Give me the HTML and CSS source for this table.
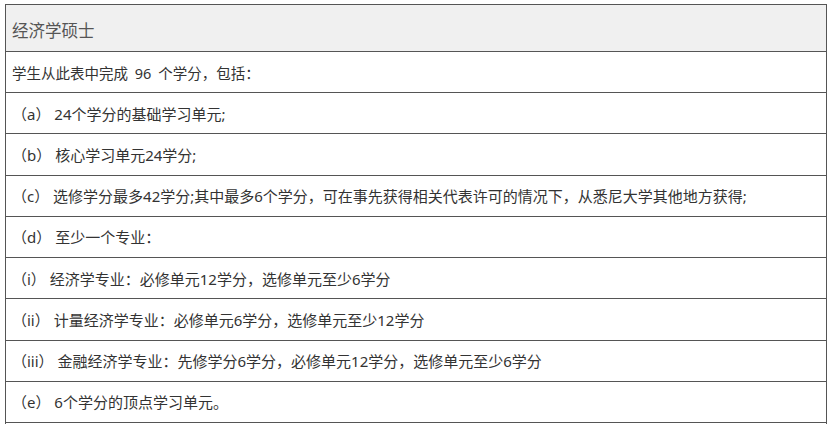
FILE: index.html
```html
<!DOCTYPE html>
<html lang="zh-CN">
<head>
<meta charset="utf-8">
<title>经济学硕士</title>
<link rel="stylesheet" href="styles.css">
</head>
<body>
<div class="table">
  <div class="row head">经济学硕士</div>
  <div class="row intro">学生从此表中完成 96 个学分，包括：</div>
  <div class="row">（a） 24个学分的基础学习单元;</div>
  <div class="row">（b） 核心学习单元24学分;</div>
  <div class="row">（c） 选修学分最多42学分;其中最多6个学分，可在事先获得相关代表许可的情况下，从悉尼大学其他地方获得;</div>
  <div class="row">（d） 至少一个专业：</div>
  <div class="row">（i） 经济学专业：必修单元12学分，选修单元至少6学分</div>
  <div class="row">（ii） 计量经济学专业：必修单元6学分，选修单元至少12学分</div>
  <div class="row">（iii） 金融经济学专业：先修学分6学分，必修单元12学分，选修单元至少6学分</div>
  <div class="row">（e） 6个学分的顶点学习单元。</div>
  <div class="row"></div>
</div>
</body>
</html>
```
FILE: styles.css
```css
html, body {
  margin: 0;
  padding: 0;
  background: #ffffff;
  overflow: hidden;
}
body {
  padding: 4px 0 0 5px;
  font-family: "Noto Sans", "Noto Sans CJK SC", sans-serif;
  font-size: 15px;
  color: #333333;
}
.table {
  width: 822px;
  box-sizing: border-box;
  border: 1px solid #555555;
  border-bottom: none;
  display: flex;
  flex-direction: column;
}
.row {
  box-sizing: border-box;
  height: 41.22px;
  border-bottom: 1px solid #555555;
  padding: 0 0 0 6px;
  display: flex;
  align-items: center;
  white-space: nowrap;
  flex: none;
}
.intro {
  font-size: 14.5px;
  word-spacing: 3px;
}
.head {
  height: 47px;
  padding-top: 3px;
  background: #f0f0f0;
  color: #555555;
  font-size: 16.5px;
}
```
